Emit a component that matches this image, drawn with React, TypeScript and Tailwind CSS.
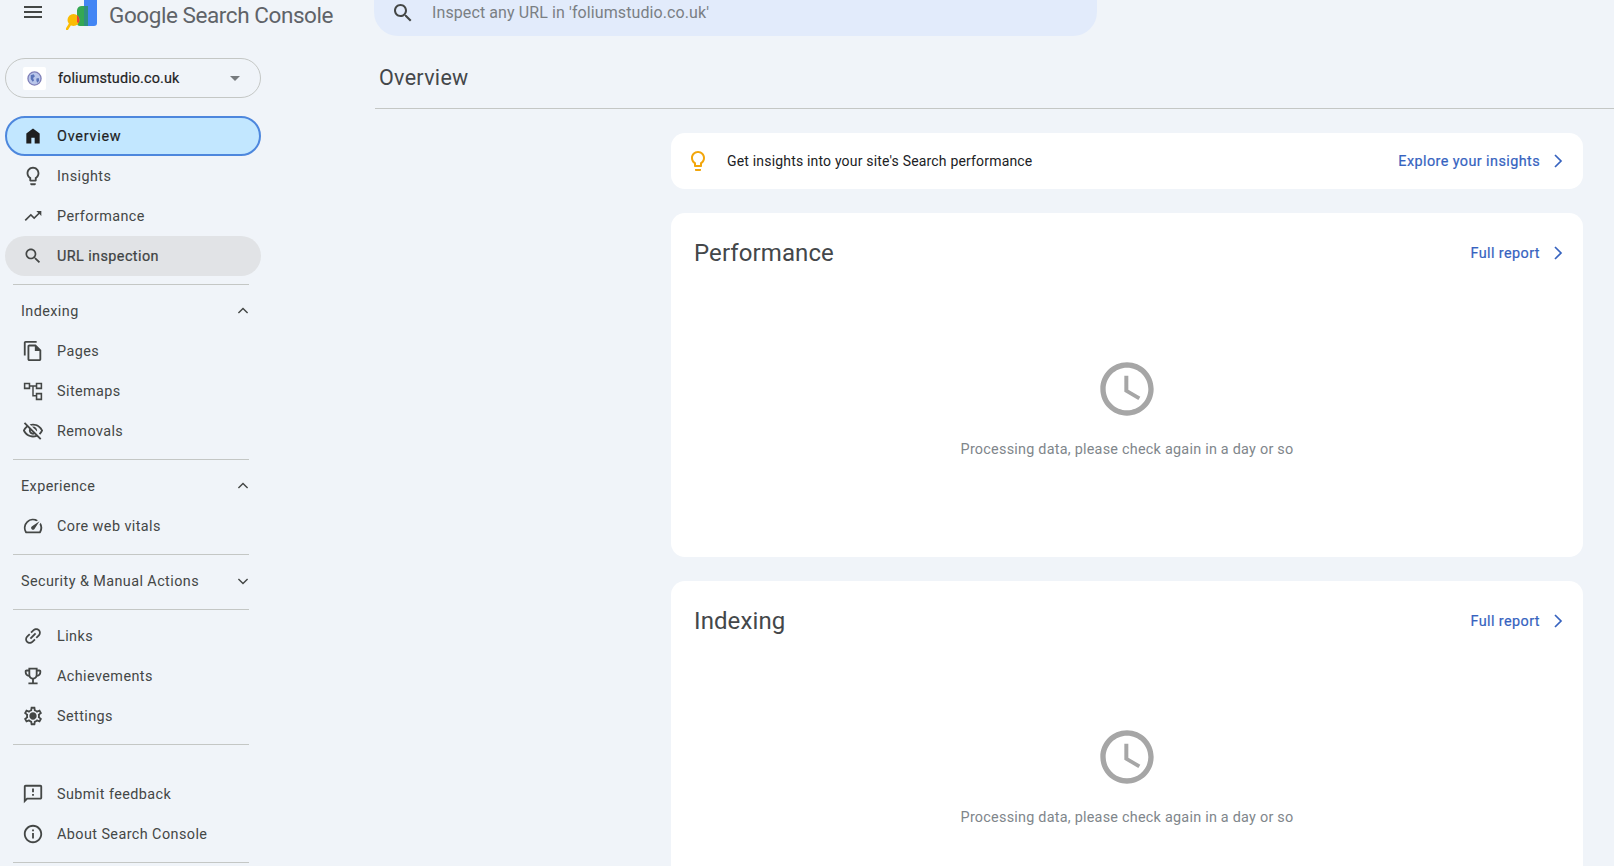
import React from "react";

const P = {
  home: "M4 21V9l8-6 8 6v12h-6v-7h-4v7z",
  bulb: "M9 21c0 .55.45 1 1 1h4c.55 0 1-.45 1-1v-1H9v1zm3-19C8.14 2 5 5.14 5 9c0 2.38 1.19 4.47 3 5.74V17c0 .55.45 1 1 1h6c.55 0 1-.45 1-1v-2.26c1.81-1.27 3-3.36 3-5.74 0-3.86-3.14-7-7-7zm2.85 11.1l-.85.6V16h-4v-2.3l-.85-.6C7.8 12.16 7 10.63 7 9c0-2.76 2.24-5 5-5s5 2.24 5 5c0 1.63-.8 3.16-2.15 4.1z",
  trend: "M16 6l2.29 2.29-4.88 4.88-4-4L2 16.59 3.41 18l6-6 4 4 6.3-6.29L22 12V6z",
  search: "M15.5 14h-.79l-.28-.27C15.41 12.59 16 11.11 16 9.5 16 5.91 13.09 3 9.5 3S3 5.91 3 9.5 5.91 16 9.5 16c1.61 0 3.09-.59 4.23-1.57l.27.28v.79l5 4.99L20.49 19l-4.99-5zm-6 0C7.01 14 5 11.99 5 9.5S7.01 5 9.5 5 14 7.01 14 9.5 11.99 14 9.5 14z",
  pages: "M16 1H4c-1.1 0-2 .9-2 2v14h2V3h12V1zm-1 4H8c-1.1 0-1.99.9-1.99 2L6 21c0 1.1.89 2 1.99 2H19c1.1 0 2-.9 2-2V11l-6-6zM8 21V7h6v5h5v9H8z",
  sitemap: "M2 3h7v7H2V3zm1.7 1.7v3.6h3.6V4.7H3.7zM15 3h7v7h-7V3zm1.7 1.7v3.6h3.6V4.7h-3.6zM15 14h7v8h-7v-8zm1.7 1.7v4.6h3.6v-4.6h-3.6zM9 5.7h6v1.6h-2.2v9h2.2v1.6h-3.8V7.3H9V5.7z",
  eyeOff: "M12 6c3.79 0 7.17 2.13 8.82 5.5-.59 1.22-1.42 2.27-2.41 3.12l1.41 1.41c1.39-1.23 2.49-2.77 3.18-4.53C21.27 7.11 17 4 12 4c-1.27 0-2.49.2-3.64.57l1.65 1.65C10.66 6.09 11.32 6 12 6zm-1.07 1.14L13 9.21c.57.25 1.03.71 1.28 1.28l2.07 2.07c.08-.34.14-.7.14-1.07C16.5 9.01 14.48 7 12 7c-.37 0-.72.05-1.07.14zM2.01 3.87l2.68 2.68C3.06 7.83 1.77 9.53 1 11.5 2.73 15.89 7 19 12 19c1.52 0 2.98-.29 4.32-.82l3.42 3.42 1.41-1.41L3.42 2.45 2.01 3.87zm7.5 7.5l2.61 2.61c-.04.01-.08.02-.12.02-1.38 0-2.5-1.12-2.5-2.5 0-.05.01-.08.01-.13zm-3.4-3.4l1.75 1.75c-.23.55-.36 1.15-.36 1.78 0 2.48 2.02 4.5 4.5 4.5.63 0 1.23-.13 1.77-.36l.98.98c-.88.24-1.8.38-2.75.38-3.79 0-7.17-2.13-8.82-5.5.7-1.43 1.72-2.61 2.93-3.53z",
  speed: "M20.38 8.57l-1.23 1.85a8 8 0 0 1-.22 7.58H5.07A8 8 0 0 1 15.58 6.85l1.85-1.23A10 10 0 0 0 3.35 19a2 2 0 0 0 1.72 1h13.85a2 2 0 0 0 1.74-1 10 10 0 0 0-.27-10.44zm-9.79 6.84a2 2 0 0 0 2.83 0l5.66-8.49-8.49 5.66a2 2 0 0 0 0 2.83z",
  link: "M3.9 12c0-1.71 1.39-3.1 3.1-3.1h4V7H7c-2.76 0-5 2.24-5 5s2.24 5 5 5h4v-1.9H7c-1.71 0-3.1-1.39-3.1-3.1zM8 13h8v-2H8v2zm9-6h-4v1.9h4c1.71 0 3.1 1.39 3.1 3.1s-1.39 3.1-3.1 3.1h-4V17h4c2.76 0 5-2.24 5-5s-2.24-5-5-5z",
  trophy: "M19 5h-2V3H7v2H5c-1.1 0-2 .9-2 2v1c0 2.55 1.92 4.63 4.39 4.94.63 1.5 1.98 2.63 3.61 2.96V19H7v2h10v-2h-4v-3.1c1.63-.33 2.98-1.46 3.61-2.96C19.08 12.63 21 10.55 21 8V7c0-1.1-.9-2-2-2zM5 8V7h2v3.82C5.84 10.4 5 9.3 5 8zm7 6c-1.65 0-3-1.35-3-3V5h6v6c0 1.65-1.35 3-3 3zm7-6c0 1.3-.84 2.4-2 2.82V7h2v1z",
  gear: "M19.43 12.98c.04-.32.07-.64.07-.98 0-.34-.03-.66-.07-.98l2.11-1.65c.19-.15.24-.42.12-.64l-2-3.46c-.09-.16-.26-.25-.44-.25-.06 0-.12.01-.17.03l-2.49 1c-.52-.4-1.08-.73-1.69-.98l-.38-2.65C14.46 2.18 14.25 2 14 2h-4c-.25 0-.46.18-.49.42l-.38 2.65c-.61.25-1.17.59-1.69.98l-2.49-1c-.06-.02-.12-.03-.18-.03-.17 0-.34.09-.43.25l-2 3.46c-.13.22-.07.49.12.64l2.11 1.65c-.04.32-.07.65-.07.98 0 .33.03.66.07.98l-2.11 1.65c-.19.15-.24.42-.12.64l2 3.46c.09.16.26.25.44.25.06 0 .12-.01.17-.03l2.49-1c.52.4 1.08.73 1.69.98l.38 2.65c.03.24.24.42.49.42h4c.25 0 .46-.18.49-.42l.38-2.65c.61-.25 1.17-.59 1.69-.98l2.49 1c.06.02.12.03.18.03.17 0 .34-.09.43-.25l2-3.46c.12-.22.07-.49-.12-.64l-2.11-1.65zm-1.98-1.71c.04.31.05.52.05.73 0 .21-.02.43-.05.73l-.14 1.13.89.7 1.08.84-.7 1.21-1.27-.51-1.04-.42-.9.68c-.43.32-.84.56-1.25.73l-1.06.43-.16 1.13-.2 1.35h-1.4l-.19-1.35-.16-1.13-1.06-.43c-.43-.18-.83-.41-1.23-.71l-.91-.7-1.06.43-1.27.51-.7-1.21 1.08-.84.89-.7-.14-1.13c-.03-.31-.05-.54-.05-.74s.02-.43.05-.73l.14-1.13-.89-.7-1.08-.84.7-1.21 1.27.51 1.04.42.9-.68c.43-.32.84-.56 1.25-.73l1.06-.43.16-1.13.2-1.35h1.39l.19 1.35.16 1.13 1.06.43c.43.18.83.41 1.23.71l.91.7 1.06-.43 1.27-.51.7 1.21-1.07.85-.89.7.14 1.13zM12 8c-2.21 0-4 1.79-4 4s1.79 4 4 4 4-1.79 4-4-1.79-4-4-4z",
  feedback: "M20 2H4c-1.1 0-1.99.9-1.99 2L2 22l4-4h14c1.1 0 2-.9 2-2V4c0-1.1-.9-2-2-2zm0 14H5.17l-.59.59-.58.58V4h16v12zm-9-4h2v2h-2zm0-6h2v4h-2z",
  info: "M11 7h2v2h-2zm0 4h2v6h-2zm1-9C6.48 2 2 6.48 2 12s4.48 10 10 10 10-4.48 10-10S17.52 2 12 2zm0 18c-4.41 0-8-3.59-8-8s3.59-8 8-8 8 3.59 8 8-3.59 8-8 8z",
  menu: "M3 18h18v-2H3v2zm0-5h18v-2H3v2zm0-7v2h18V6H3z",
  clock: "M11.99 2C6.47 2 2 6.48 2 12s4.47 10 9.99 10C17.52 22 22 17.52 22 12S17.52 2 11.99 2zM12 20c-4.42 0-8-3.58-8-8s3.58-8 8-8 8 3.58 8 8-3.58 8-8 8zm.5-13H11v6l5.25 3.15.75-1.23-4.5-2.67z",
};

function Icon({ d, className, rotate, evenOdd }: { d: string; className: string; rotate?: boolean; evenOdd?: boolean }) {
  return (
    <svg viewBox="0 0 24 24" fill="currentColor" className={className}>
      <path d={d} fillRule={evenOdd ? "evenodd" : undefined} transform={rotate ? "rotate(-45 12 12)" : undefined} />
    </svg>
  );
}

function Chevron({ d, className }: { d: string; className: string }) {
  return (
    <svg viewBox="0 0 24 24" fill="none" stroke="currentColor" strokeWidth="1.7" className={className}>
      <path d={d} />
    </svg>
  );
}

function Row({ icon, label, rotate, pill, small, evenOdd }: { icon: string; label: string; rotate?: boolean; pill?: string; small?: boolean; evenOdd?: boolean }) {
  return (
    <div className={`flex h-10 items-center rounded-full pl-[17px] text-[14.4px] tracking-[0.42px] text-[#444746] ${pill ?? ""}`}>
      <Icon d={icon} rotate={rotate} evenOdd={evenOdd} className={small ? "mx-px h-5 w-5 shrink-0" : "h-[22px] w-[22px] shrink-0"} />
      <span className="ml-[13px] mt-[2px] whitespace-nowrap">{label}</span>
    </div>
  );
}

function Section({ label, open }: { label: string; open: boolean }) {
  return (
    <div className="flex h-10 items-center justify-between pl-4 pr-2 text-[14.4px] tracking-[0.42px] text-[#444746]">
      <span className="mt-[2px] whitespace-nowrap">{label}</span>
      <Chevron d={open ? "M6.5 14.5L12 9l5.5 5.5" : "M6.5 9.5L12 15l5.5-5.5"} className="h-5 w-5" />
    </div>
  );
}

function Rule({ after = "mb-[6px]" }: { after?: string }) {
  return <div className={`ml-2 mt-2 h-px w-[236px] bg-[#c4c7c5] ${after}`} />;
}

function Link({ label }: { label: string }) {
  return (
    <div className="flex items-center text-[14.4px] tracking-[0.42px] text-[#3663bf] [-webkit-text-stroke:0.2px_#3663bf]">
      <span className="mt-[2px] whitespace-nowrap">{label}</span>
      <Chevron d="M9 6l6 6-6 6" className="ml-[6px] h-6 w-6" />
    </div>
  );
}

function ReportCard({ title }: { title: string }) {
  return (
    <div className="mt-6 flex h-[344px] flex-col rounded-[14px] bg-white pl-[23px] pr-[13px]">
      <div className="mt-5 flex h-10 items-center justify-between">
        <h2 className="text-[24px] font-normal tracking-[0.1px] text-[#44474a]">{title}</h2>
        <Link label="Full report" />
      </div>
      <div className="mt-[84px] flex flex-col items-center pr-[10px]">
        <Icon d={P.clock} className="h-16 w-16 text-[#a6a6a6]" />
        <p className="mt-[18px] text-[14.4px] tracking-[0.24px] text-[#80868b]">Processing data, please check again in a day or so</p>
      </div>
    </div>
  );
}

export default function App() {
  return (
    <div className="flex h-[866px] w-[1614px] flex-col overflow-hidden bg-[#f0f4f9] font-[Roboto,sans-serif]">
      <header className="relative flex h-9 shrink-0 items-start">
        <Icon d={P.menu} className="ml-[19px] h-6 w-[28px] text-[#444746]" />
        <svg viewBox="0 0 32 30" className="ml-[19px] h-[30px] w-8 shrink-0">
          <rect x="18" y="-8" width="13" height="34" rx="3" fill="#4285f4" />
          <path d="M11 10a5 5 0 0 1 5-4h6v20H14a3 3 0 0 1-3-3z" fill="#34a853" />
          <path d="M18 6h4v20h-4z" fill="#2f8f7f" />
          <circle cx="7.5" cy="20" r="6" fill="#fbbc04" />
          <path d="M11 15a6 6 0 0 1 2.5 5 6 6 0 0 1-1 3.2L11 22z" fill="#ea4335" />
          <path d="M4.5 23.5L1 29" stroke="#fbbc04" strokeWidth="2.6" strokeLinecap="round" />
        </svg>
        <span className="ml-[11px] mt-[-2px] whitespace-nowrap text-[22.5px] leading-[34px] tracking-[-0.43px] text-[#5f6368]">Google Search Console</span>
        <div className="absolute left-[374px] top-0 flex h-9 w-[723px] items-center rounded-b-[24px] bg-[#e2ebfb]">
          <Icon d={P.search} className="ml-[17px] mt-[-11px] h-6 w-6 text-[#444746]" />
          <span className="ml-[17px] mt-[-10px] text-[16px] tracking-[0.1px] text-[#7a7f84]">Inspect any URL in 'foliumstudio.co.uk'</span>
        </div>
      </header>
      <div className="flex min-h-0 flex-1">
        <aside className="w-[375px] shrink-0 pl-[5px]">
          <div className="w-[256px]">
            <div className="mt-[22px] flex h-10 items-center rounded-full border border-[#c4c7c5] pl-[17px] pr-[20px]">
              <div className="flex h-[23px] w-[23px] shrink-0 items-center justify-center rounded-[2px] bg-white">
                <svg viewBox="0 0 16 16" className="h-[15px] w-[15px]">
                  <circle cx="8" cy="8" r="7" fill="#b9c6ea" stroke="#7f7fb8" strokeWidth="1.4" />
                  <path d="M4 4.5l3-1 1.5 2-2 2 1 2.5-1.5 1.5-2-3zM10 8l2.5-.5.5 3-2 2-1-2z" fill="#5a73b8" />
                </svg>
              </div>
              <span className="ml-[12px] mt-[1px] flex-1 whitespace-nowrap text-[14.4px] tracking-[0.12px] text-[#1f1f1f] [-webkit-text-stroke:0.2px_#1f1f1f]">foliumstudio.co.uk</span>
              <span className="h-0 w-0 border-x-[5px] border-t-[5px] border-x-transparent border-t-[#777b7e]" />
            </div>
            <div className="mt-[18px]">
              <div className="flex h-10 items-center rounded-full border-2 border-[#4d87dd] bg-[#c2e7ff] pl-[15px] text-[14.4px] tracking-[0.75px] text-[#1f1f1f] [-webkit-text-stroke:0.2px_#1f1f1f]">
                <Icon d={P.home} className="mx-px h-5 w-5 shrink-0" />
                <span className="ml-[13px] mt-[2px]">Overview</span>
              </div>
              <Row icon={P.bulb} label="Insights" />
              <Row icon={P.trend} small label="Performance" />
              <Row icon={P.search} small label="URL inspection" pill="bg-[#e1e3e6] text-[#303336] [-webkit-text-stroke:0.2px_#303336]" />
            </div>
            <Rule />
            <Section label="Indexing" open />
            <Row icon={P.pages} label="Pages" />
            <Row icon={P.sitemap} evenOdd label="Sitemaps" />
            <Row icon={P.eyeOff} label="Removals" />
            <Rule />
            <Section label="Experience" open />
            <Row icon={P.speed} label="Core web vitals" />
            <Rule />
            <Section label="Security & Manual Actions" open={false} />
            <Rule />
            <Row icon={P.link} rotate label="Links" />
            <Row icon={P.trophy} label="Achievements" />
            <Row icon={P.gear} label="Settings" />
            <Rule after="mb-[29px]" />
            <Row icon={P.feedback} label="Submit feedback" />
            <Row icon={P.info} label="About Search Console" />
            <Rule />
          </div>
        </aside>
        <main className="min-w-0 flex-1">
          <div className="flex h-[73px] items-start border-b border-[#c4c7c5] pl-[4px]">
            <h1 className="mt-[28px] text-[21.5px] font-normal leading-7 tracking-[0.3px] text-[#44474a]">Overview</h1>
          </div>
          <div className="pl-[296px] pr-[31px]">
            <div className="mt-6 flex h-14 items-center justify-between rounded-[14px] bg-white pl-[15px] pr-[13px]">
              <div className="flex items-center">
                <Icon d={P.bulb} className="h-6 w-6 text-[#f2a60c]" />
                <span className="ml-[17px] text-[14px] tracking-[0.18px] text-[#202124]">Get insights into your site's Search performance</span>
              </div>
              <Link label="Explore your insights" />
            </div>
            <ReportCard title="Performance" />
            <ReportCard title="Indexing" />
          </div>
        </main>
      </div>
    </div>
  );
}
